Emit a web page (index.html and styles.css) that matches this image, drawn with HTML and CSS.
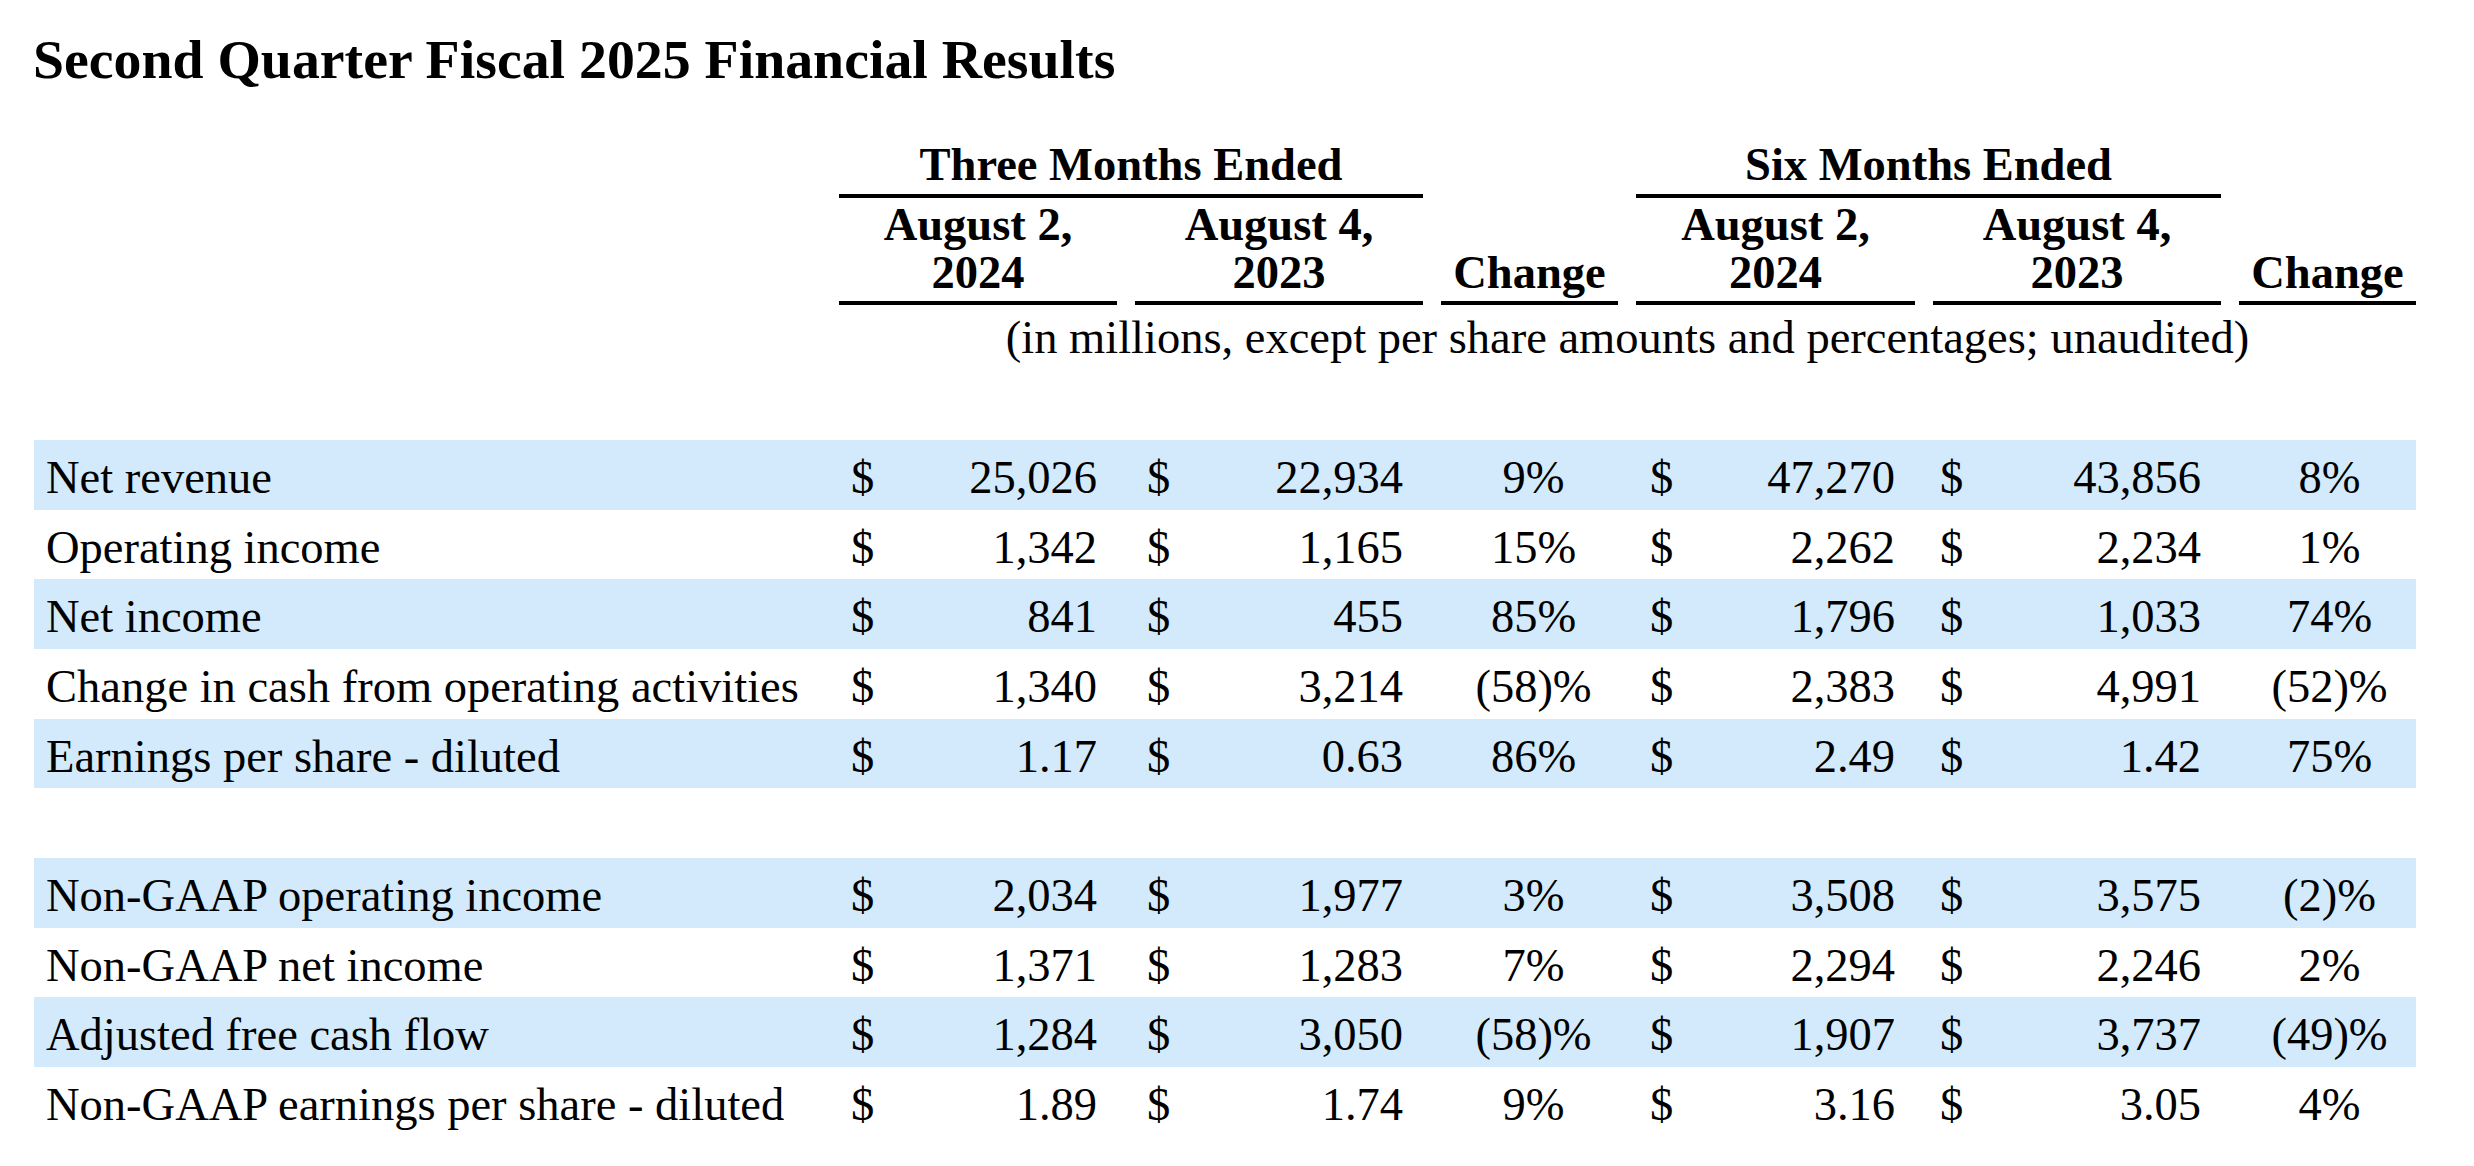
FILE: index.html
```html
<!DOCTYPE html>
<html lang="en">
<head>
<meta charset="utf-8">
<title>Second Quarter Fiscal 2025 Financial Results</title>
<link rel="stylesheet" href="styles.css">
</head>
<body>
<div class="page">
  <h1 class="title">Second Quarter Fiscal 2025 Financial Results</h1>

  <div class="grid head1">
    <div></div>
    <div class="span2">Three Months Ended</div>
    <div></div>
    <div class="span2">Six Months Ended</div>
    <div></div>
  </div>

  <div class="grid head2">
    <div></div>
    <div class="hc">August 2,<br>2024</div>
    <div class="hc">August 4,<br>2023</div>
    <div class="hc">Change</div>
    <div class="hc">August 2,<br>2024</div>
    <div class="hc">August 4,<br>2023</div>
    <div class="hc">Change</div>
  </div>

  <div class="grid sub">
    <div></div>
    <div class="note">(in millions, except per share amounts and percentages; unaudited)</div>
  </div>

  <div class="body">
    <div class="grid row band">
      <div class="label">Net revenue</div>
      <div class="money"><span>$</span><span>25,026</span></div>
      <div class="money"><span>$</span><span>22,934</span></div>
      <div class="chg">9%</div>
      <div class="money"><span>$</span><span>47,270</span></div>
      <div class="money"><span>$</span><span>43,856</span></div>
      <div class="chg">8%</div>
    </div>
    <div class="grid row">
      <div class="label">Operating income</div>
      <div class="money"><span>$</span><span>1,342</span></div>
      <div class="money"><span>$</span><span>1,165</span></div>
      <div class="chg">15%</div>
      <div class="money"><span>$</span><span>2,262</span></div>
      <div class="money"><span>$</span><span>2,234</span></div>
      <div class="chg">1%</div>
    </div>
    <div class="grid row band">
      <div class="label">Net income</div>
      <div class="money"><span>$</span><span>841</span></div>
      <div class="money"><span>$</span><span>455</span></div>
      <div class="chg">85%</div>
      <div class="money"><span>$</span><span>1,796</span></div>
      <div class="money"><span>$</span><span>1,033</span></div>
      <div class="chg">74%</div>
    </div>
    <div class="grid row">
      <div class="label">Change in cash from operating activities</div>
      <div class="money"><span>$</span><span>1,340</span></div>
      <div class="money"><span>$</span><span>3,214</span></div>
      <div class="chg">(58)%</div>
      <div class="money"><span>$</span><span>2,383</span></div>
      <div class="money"><span>$</span><span>4,991</span></div>
      <div class="chg">(52)%</div>
    </div>
    <div class="grid row band">
      <div class="label">Earnings per share - diluted</div>
      <div class="money"><span>$</span><span>1.17</span></div>
      <div class="money"><span>$</span><span>0.63</span></div>
      <div class="chg">86%</div>
      <div class="money"><span>$</span><span>2.49</span></div>
      <div class="money"><span>$</span><span>1.42</span></div>
      <div class="chg">75%</div>
    </div>

    <div class="row spacer"></div>

    <div class="grid row band">
      <div class="label">Non-GAAP operating income</div>
      <div class="money"><span>$</span><span>2,034</span></div>
      <div class="money"><span>$</span><span>1,977</span></div>
      <div class="chg">3%</div>
      <div class="money"><span>$</span><span>3,508</span></div>
      <div class="money"><span>$</span><span>3,575</span></div>
      <div class="chg">(2)%</div>
    </div>
    <div class="grid row">
      <div class="label">Non-GAAP net income</div>
      <div class="money"><span>$</span><span>1,371</span></div>
      <div class="money"><span>$</span><span>1,283</span></div>
      <div class="chg">7%</div>
      <div class="money"><span>$</span><span>2,294</span></div>
      <div class="money"><span>$</span><span>2,246</span></div>
      <div class="chg">2%</div>
    </div>
    <div class="grid row band">
      <div class="label">Adjusted free cash flow</div>
      <div class="money"><span>$</span><span>1,284</span></div>
      <div class="money"><span>$</span><span>3,050</span></div>
      <div class="chg">(58)%</div>
      <div class="money"><span>$</span><span>1,907</span></div>
      <div class="money"><span>$</span><span>3,737</span></div>
      <div class="chg">(49)%</div>
    </div>
    <div class="grid row">
      <div class="label">Non-GAAP earnings per share - diluted</div>
      <div class="money"><span>$</span><span>1.89</span></div>
      <div class="money"><span>$</span><span>1.74</span></div>
      <div class="chg">9%</div>
      <div class="money"><span>$</span><span>3.16</span></div>
      <div class="money"><span>$</span><span>3.05</span></div>
      <div class="chg">4%</div>
    </div>
  </div>
</div>
</body>
</html>
```
FILE: styles.css
```css
html, body {
  margin: 0;
  padding: 0;
  background: #ffffff;
}

body {
  font-family: "Liberation Serif", "Times New Roman", serif;
  color: #000000;
  font-size: 46.5px;
}

.page {
  padding: 27px 0 0 34px;
}

.title {
  margin: 0 0 0 -1px;
  font-size: 55.8px;
  line-height: 64px;
  font-weight: bold;
}

.grid {
  display: grid;
  grid-template-columns: 787px 278px 288px 177px 279px 288px 177px;
  column-gap: 18px;
  width: 2382px;
}

/* header row 1 */
.head1 {
  margin-top: 49px;
  font-weight: bold;
  line-height: 50px;
}

.head1 .span2 {
  grid-column: span 2;
  text-align: center;
  padding-bottom: 4px;
  border-bottom: 4px solid #000;
}

/* header row 2 */
.head2 {
  font-weight: bold;
  line-height: 48px;
}

.head2 .hc {
  display: flex;
  align-items: flex-end;
  justify-content: center;
  text-align: center;
  padding: 3px 0 4px;
  border-bottom: 4px solid #000;
}

/* units note */
.sub {
  line-height: 48px;
  padding-top: 9px;
}

.sub .note {
  grid-column: 2 / -1;
  text-align: center;
  white-space: nowrap;
}

/* data rows */
.body {
  margin-top: 78px;
}

.row {
  height: 69.67px;
  box-sizing: border-box;
  padding-top: 6px;
  line-height: 63.67px;
  white-space: nowrap;
}

.band {
  background: #d2eafb;
}

.label {
  padding-left: 12px;
}

.money {
  display: flex;
  justify-content: space-between;
  padding-right: 20px;
}

.money:nth-child(2),
.money:nth-child(3) {
  padding-left: 12px;
}

.money:nth-child(5) {
  padding-left: 14px;
}

.money:nth-child(6) {
  padding-left: 7px;
}

.chg {
  text-align: center;
}

.chg:nth-child(4) {
  padding-left: 8px;
}

.chg:nth-child(7) {
  padding-left: 4px;
}
```
